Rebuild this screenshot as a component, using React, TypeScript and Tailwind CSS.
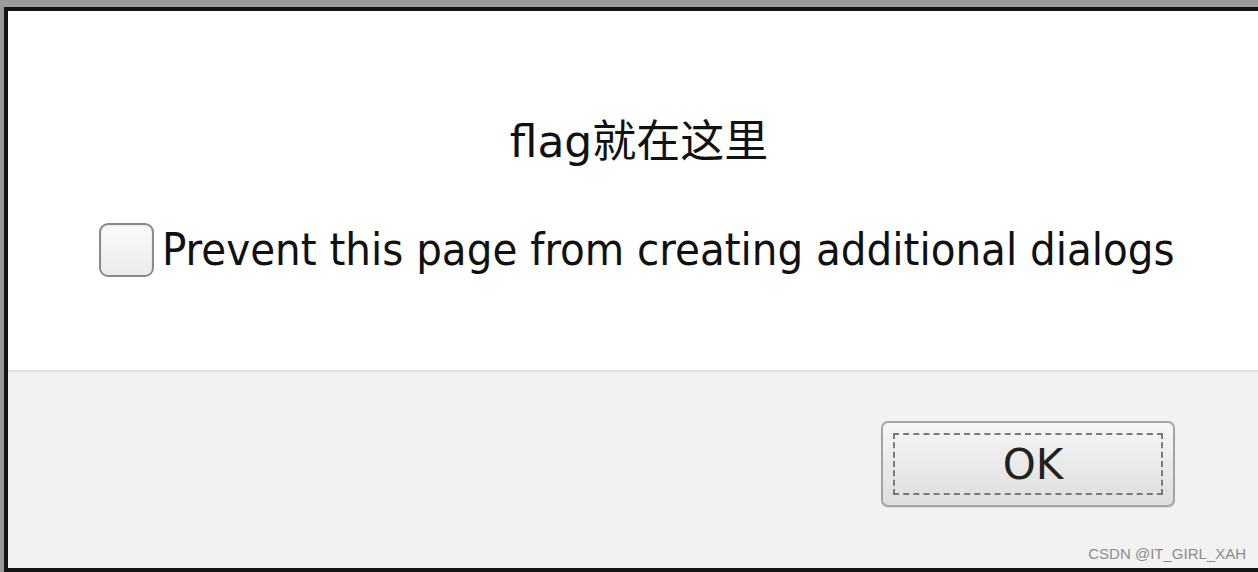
import React from "react";

export default function App() {
  return (
    <div className="w-[1258px] h-[572px] overflow-hidden bg-[#9b9b9b] pt-[7px] pl-[4px] flex flex-col">
      {/* dialog frame */}
      <div className="flex-1 flex flex-col border-l-4 border-t-4 border-b-4 border-[#141414] bg-white">
        {/* message area */}
        <div className="h-[359px] flex flex-col bg-white">
          <div
            className="pt-[105px] h-[157px] text-center text-[44px] leading-[52px] text-[#111]"
            style={{ fontFamily: '"DejaVu Sans", "Noto Sans CJK SC", sans-serif' }}
          >
            <span className="pl-[12px]">flag就在这里</span>
          </div>
          <div className="mt-[55px] pl-[91px] flex items-center gap-[8px]">
            <div className="w-[55px] h-[54px] rounded-[9px] border-2 border-[#8a8a8a] bg-gradient-to-b from-[#fafafa] to-[#ececec] shadow-[inset_0_1px_2px_rgba(0,0,0,0.08)]" />
            <span
              className="text-[45px] leading-[54px] text-[#111]"
              style={{ fontFamily: '"DejaVu Sans Condensed", "DejaVu Sans", sans-serif' }}
            >
              Prevent this page from creating additional dialogs
            </span>
          </div>
        </div>
        {/* button area */}
        <div className="flex-1 relative border-t-2 border-[#e2e2e2] bg-[#f2f2f2] flex justify-end pt-[49px] pr-[83px]">
          <button className="w-[294px] h-[86px] rounded-[7px] border-2 border-[#a3a3a3] bg-gradient-to-b from-[#f6f6f6] to-[#dedede] p-[10px] shadow-[0_1px_1px_rgba(0,0,0,0.1)]">
            <div
              className="w-full h-full border-2 border-dashed border-[#7a7a7a] flex items-center justify-center text-[42px] text-[#222] pl-[10px]"
              style={{ fontFamily: '"DejaVu Sans", sans-serif' }}
            >
              OK
            </div>
          </button>
          <div
            className="absolute right-[12px] bottom-[3px] text-[15px] text-[#8c8c8c]"
            style={{ fontFamily: '"Liberation Sans", Arial, sans-serif' }}
          >
            CSDN @IT_GIRL_XAH
          </div>
        </div>
      </div>
    </div>
  );
}
